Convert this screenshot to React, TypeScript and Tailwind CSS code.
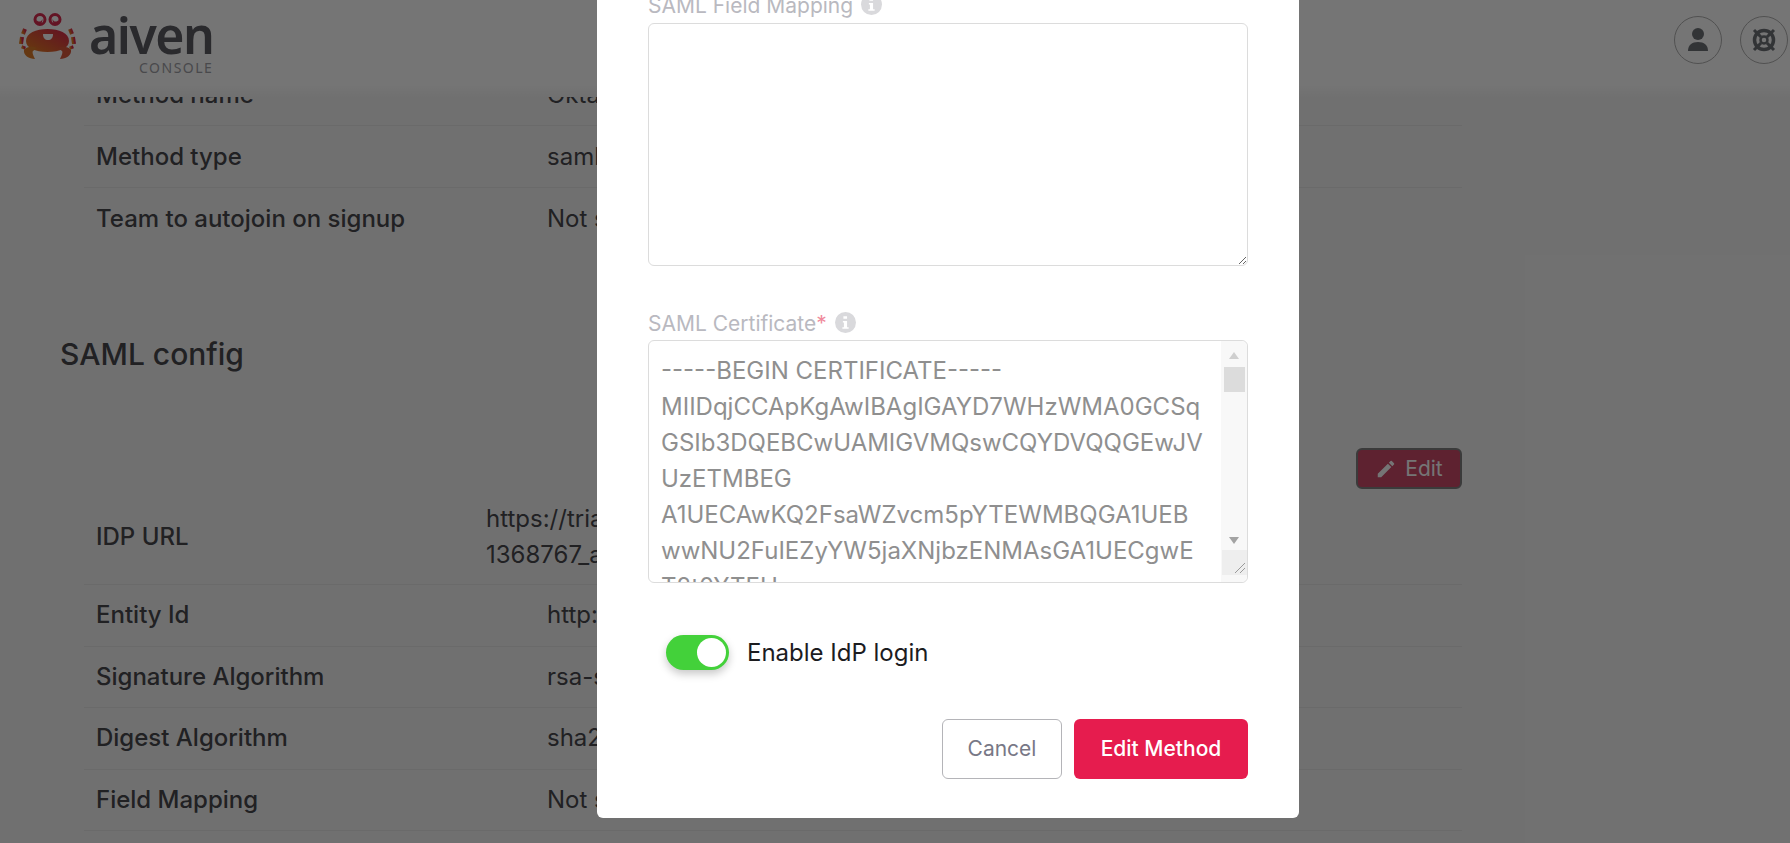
import { JSX } from "react";

const CERT = `-----BEGIN CERTIFICATE-----
MIIDqjCCApKgAwIBAgIGAYD7WHzWMA0GCSq
GSIb3DQEBCwUAMIGVMQswCQYDVQQGEwJV
UzETMBEG
A1UECAwKQ2FsaWZvcm5pYTEWMBQGA1UEB
wwNU2FuIEZyYW5jaXNjbzENMAsGA1UECgwE
T2t0YTEU
MBIGA1UECwwLU1NPUHJvdmlkZXIxFjAUBgNV`;

function CrabLogo(): JSX.Element {
  return (
    <svg width="57" height="47" viewBox="0 0 57 47" className="shrink-0">
      <defs>
        <linearGradient id="crab" x1="0" y1="1" x2="1" y2="0">
          <stop offset="0" stopColor="#e2801f" />
          <stop offset="1" stopColor="#d8244f" />
        </linearGradient>
      </defs>
      <g fill="none" stroke="#d82c50" strokeWidth="3">
        <circle cx="21" cy="6.5" r="5" />
        <circle cx="36" cy="6.5" r="5" />
      </g>
      <path d="M17.5 7c2 2.500 5 2 6-1 0 3-1 5-3.500 5-2 0-3-2-2.500-4zM39.500 7c-2 2.500-5 2-6-1 0 3 1 5 3.500 5 2 0 3-2 2.500-4z" fill="#d82c50" />
      <path d="M7 28C7 20 17 16 28.500 16S50 20 50 28c0 7-9 11-21.500 11S7 35 7 28z" fill="url(#crab)" />
      <path d="M24 21h10c0 4-2 6-5 6s-5-2-5-6z" fill="#fff" />
      <g fill="none" stroke="url(#crab)" strokeWidth="4">
        <path d="M6 16l-2 5" />
        <path d="M3 24l-1 7" />
        <path d="M5 33l-1 3" />
        <path d="M51 16l2 5" />
        <path d="M54 24l1 7" />
        <path d="M52 33l1 3" />
      </g>
      <path d="M5 37c3-4 9-4 13-2l-4 3c-1 1 0 4 2 8-6 0-12-4-11-9z" fill="#dc7a28" />
      <path d="M52 37c-3-4-9-4-13-2l4 3c1 1 0 4-2 8 6 0 12-4 11-9z" fill="#d9583a" />
    </svg>
  );
}

function InfoIcon(): JSX.Element {
  return (
    <svg width="21" height="21" viewBox="0 0 20 20" className="shrink-0">
      <circle cx="10" cy="10" r="10" fill="#d9d9dc" />
      <path d="M8 4h3.500v2.500H8zM7.500 8.500H11.500v6H13V16H7v-1.500h1.500V10h-1z" fill="#fff" />
    </svg>
  );
}

function HeaderButton({ children }: { children: JSX.Element }): JSX.Element {
  return (
    <div className="flex h-12 w-12 items-center justify-center rounded-full border border-[#b0b0b0]">
      {children}
    </div>
  );
}

function Row({
  label,
  value,
  valueClass = "pl-[197px]",
  rowClass = "h-[61.5px]",
}: {
  label: string;
  value: string;
  valueClass?: string;
  rowClass?: string;
}): JSX.Element {
  return (
    <div className={`flex items-center border-b border-[#e8e8e8] ${rowClass}`}>
      <div className="w-[266px] shrink-0 whitespace-nowrap pl-3 font-medium">{label}</div>
      <div className={`whitespace-pre-line font-normal ${valueClass}`}>{value}</div>
    </div>
  );
}

function FieldLabel({ children }: { children: React.ReactNode }): JSX.Element {
  return (
    <div className="flex items-start gap-2 text-[21px] leading-[24px] text-[#b9b9c0]">
      <span>{children}</span>
      <InfoIcon />
    </div>
  );
}

export default function App(): JSX.Element {
  return (
    <div className="relative h-[843px] w-[1790px] overflow-hidden bg-[#f5f5f5] font-['Inter',sans-serif] text-[24px] text-[#48484e]">
      <header className="absolute inset-x-0 top-0 z-10 flex flex-col">
        <div className="flex h-[84px] items-start justify-between bg-[#ffffff] pl-[19px] pr-[2px]">
          <div className="mt-[13px] flex items-start gap-[13px]">
            <CrabLogo />
            <div className="flex flex-col items-end font-['Noto_Sans',sans-serif]">
              <span className="text-[50px] font-semibold leading-[44px] tracking-[-1.5px] text-[#5c5c63]">aiven</span>
              <span className="mt-[2px] text-[14px] leading-[18px] tracking-[1.5px] text-[#a0a0a6]">CONSOLE</span>
            </div>
          </div>
          <div className="mt-[16px] flex items-center gap-[18px]">
            <HeaderButton>
              <svg width="24" height="26" viewBox="0 0 24 26" fill="#6d7177">
                <circle cx="12" cy="7" r="6" />
                <path d="M2 24c0-6 4-9 10-9s10 3 10 9z" />
              </svg>
            </HeaderButton>
            <HeaderButton>
              <svg width="26" height="26" viewBox="0 0 26 26" fill="none" stroke="#6d7177">
                <circle cx="13" cy="13" r="9.500" strokeWidth="3.500" />
                <circle cx="13" cy="13" r="3.500" strokeWidth="2.500" />
                <path d="M3 3l7 7M23 3l-7 7M3 23l7-7M23 23l-7-7" strokeWidth="3" />
              </svg>
            </HeaderButton>
          </div>
        </div>
        <div className="h-[13px] bg-linear-to-b from-[#ffffff] to-[#f5f5f5]" />
      </header>

      <main className="pt-[64px]">
        <section className="ml-[84px] w-[1378px]">
          <Row label="Method name" value="Okta SAML" rowClass="h-[62px]" />
          <Row label="Method type" value="saml" rowClass="h-[62px]" />
          <Row label="Team to autojoin on signup" value="Not set" rowClass="h-[62px] !border-b-0" />
        </section>

        <h2 className="ml-[60px] mt-[84px] text-[30px] font-medium leading-[40px]">SAML config</h2>

        <div className="mr-[328px] mt-[74px] flex justify-end">
          <button className="flex h-[41px] w-[106px] items-center justify-center gap-2 rounded-md border-2 border-[#808080] bg-[#cc4a6a] text-[21px] text-[#ffffff]">
            <svg width="22" height="22" viewBox="0 0 24 24" fill="#fff">
              <path d="M3 17.250V21h3.750L17.810 9.940l-3.750-3.750L3 17.250zM20.710 7.040a1 1 0 0 0 0-1.410l-2.340-2.340a1 1 0 0 0-1.410 0l-1.830 1.830 3.750 3.750 1.830-1.830z" />
            </svg>
            Edit
          </button>
        </div>

        <section className="ml-[84px] mt-[1px] w-[1378px]">
          <Row
            label="IDP URL"
            value={"https://trial-1368767.okta.com/app/trial-\n1368767_aiven_1/sso/saml"}
            valueClass="pl-[136px] leading-[36px]"
            rowClass="h-[95px]"
          />
          <Row label="Entity Id" value="http://www.okta.com/exk" />
          <Row label="Signature Algorithm" value="rsa-sha256" />
          <Row label="Digest Algorithm" value="sha256" />
          <Row label="Field Mapping" value="Not set" />
        </section>
      </main>

      <div className="absolute inset-0 z-20 bg-[#000000]/54" />

      <div className="absolute left-[597px] top-0 z-30 flex h-[818px] w-[702px] flex-col rounded-b-md bg-[#ffffff] px-[51px]">
        <div className="-mt-[6px]">
          <FieldLabel>SAML Field Mapping</FieldLabel>
        </div>
        <textarea
          readOnly
          className="mt-[5px] h-[243px] w-full rounded-md border border-[#dcdcdc] outline-none"
        />

        <div className="mt-[46px]">
          <FieldLabel>
            SAML Certificate<span className="text-[#f08a9c]">*</span>
          </FieldLabel>
        </div>
        <div className="relative mt-[4px]">
          <textarea
            readOnly
            value={CERT}
            className="block h-[243px] w-full resize-none overflow-hidden rounded-md border border-[#dcdcdc] px-3 pb-[8px] pt-[12px] text-[24px] leading-[36px] text-[#8f8f8f] outline-none [white-space:pre]"
          />
          <div className="pointer-events-none absolute bottom-px right-px top-px flex w-[26px] flex-col items-center rounded-r-md bg-[#f8f8f8]">
            <div className="mt-[11px] h-0 w-0 border-x-[5px] border-b-[7px] border-x-transparent border-b-[#cfcfcf]" />
            <div className="mt-[8px] h-[25px] w-[21px] bg-[#dcdcdc]" />
            <div className="mt-[145px] h-0 w-0 border-x-[5px] border-t-[7px] border-x-transparent border-t-[#a3a3a3]" />
            <div className="mt-[6px] flex h-[25px] w-[25px] items-end justify-end bg-[#eeeeee] pb-px pr-px">
              <svg width="12" height="12" viewBox="0 0 12 12" stroke="#9a9a9a" fill="none">
                <path d="M1 11L11 1M6 11l5-5" />
              </svg>
            </div>
          </div>
        </div>

        <div className="mt-[52px] flex items-center gap-[18px] pl-[18px]">
          <div className="flex h-[35px] w-[63px] items-center justify-end rounded-full bg-[#43d13a] pr-[3px] shadow-[0_4px_8px_rgba(0,0,0,0.22)]">
            <div className="h-[29px] w-[29px] rounded-full bg-[#ffffff]" />
          </div>
          <span className="text-[24px] leading-[28px] text-[#1c1c1f]">Enable IdP login</span>
        </div>

        <div className="mt-[49px] flex justify-end gap-3">
          <button className="h-[60px] w-[120px] rounded-md border border-[#b4b4b8] text-[21px] font-normal text-[#787886]">
            Cancel
          </button>
          <button className="h-[60px] w-[174px] rounded-md bg-[#e61c4e] text-[21px] font-medium text-[#ffffff]">
            Edit Method
          </button>
        </div>
      </div>
    </div>
  );
}
